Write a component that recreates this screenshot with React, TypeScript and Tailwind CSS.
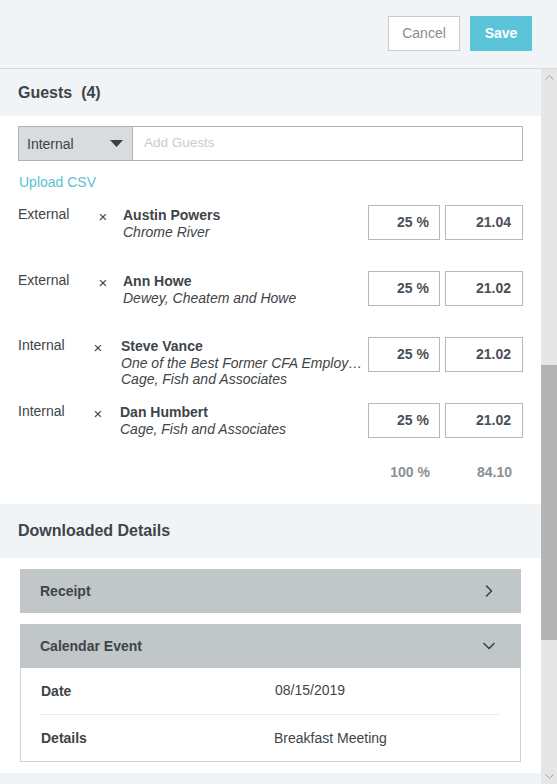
import React from "react";

const guests = [
  { type: "External", name: "Austin Powers", lines: ["Chrome River"], pct: "25 %", amt: "21.04", typeW: "w-[80px]", namePad: "pl-[15px]", pt: "pt-[1px]", subLead: "leading-[17px]" },
  { type: "External", name: "Ann Howe", lines: ["Dewey, Cheatem and Howe"], pct: "25 %", amt: "21.02", typeW: "w-[80px]", namePad: "pl-[15px]", pt: "pt-[1px]", subLead: "leading-[17px]" },
  { type: "Internal", name: "Steve Vance", lines: ["One of the Best Former CFA Employ…", "Cage, Fish and Associates"], pct: "25 %", amt: "21.02", typeW: "w-[75px]", namePad: "pl-[18px]", pt: "pt-0", subLead: "leading-[16px]" },
  { type: "Internal", name: "Dan Humbert", lines: ["Cage, Fish and Associates"], pct: "25 %", amt: "21.02", typeW: "w-[75px]", namePad: "pl-[17px]", pt: "pt-0", subLead: "leading-[16px]" },
];

function ChevronRight() {
  return (
    <svg width="12" height="14" viewBox="0 0 12 14" fill="none">
      <path d="M3.5 2 L8.5 7 L3.5 12" stroke="#3e4448" strokeWidth="1.6" strokeLinecap="round" strokeLinejoin="round" />
    </svg>
  );
}

function ChevronDown() {
  return (
    <svg width="14" height="10" viewBox="0 0 14 10" fill="none">
      <path d="M2 2.5 L7 7.5 L12 2.5" stroke="#3e4448" strokeWidth="1.6" strokeLinecap="round" strokeLinejoin="round" />
    </svg>
  );
}

export default function App() {
  return (
    <div
      className="w-[557px] h-[784px] overflow-hidden bg-[#f0f4f7] flex flex-col text-[14px] text-[#3e4448]"
      style={{ fontFamily: '"Liberation Sans", Arial, sans-serif' }}
    >
      {/* Header */}
      <div className="h-[69px] shrink-0 border-b border-[#d5dadd] bg-[#f0f4f7] flex items-start justify-end pt-[16px] pr-[25px] gap-[10px]">
        <button className="w-[72px] h-[35px] bg-white border border-[#c7c9cb] text-[#8a8d90] text-[14px]">Cancel</button>
        <button className="w-[62px] h-[35px] bg-[#5bc4d8] text-white font-bold text-[14px]">Save</button>
      </div>

      {/* Scroll region */}
      <div className="flex flex-1 min-h-0">
        <div className="flex-1 flex flex-col min-w-0">
          {/* Guests header */}
          <div className="h-[47px] shrink-0 bg-[#f0f4f7] flex items-center px-[18px]">
            <span className="font-bold text-[16px] text-[#3e4448] whitespace-pre">Guests  (4)</span>
          </div>

          {/* Guests body */}
          <div className="bg-white pt-[10px] pb-[23px] pr-[18px] pl-[18px]">
            <div className="flex h-[35px]">
              <div className="w-[115px] h-full bg-[#d8dcde] border border-[#aeb2b5] flex items-center justify-between pl-[8px] pr-[9px]">
                <span className="text-[#3e4448] pt-[1px]">Internal</span>
                <svg width="13" height="7" viewBox="0 0 13 7">
                  <path d="M0 0 L13 0 L6.5 7 Z" fill="#3a3f43" />
                </svg>
              </div>
              <div className="flex-1 h-full border border-l-0 border-[#aeb2b5] flex items-center pl-[11px] text-[#c9cccf] text-[13.5px]">
                Add Guests
              </div>
            </div>
            <div className="mt-[12px] leading-[18px] text-[#5bbfd4] text-[14px] ml-[1px]">Upload CSV</div>

            <div className="mt-[14px] flex flex-col gap-[31px]">
              {guests.map((g, i) => (
                <div key={i} className="flex items-start h-[35px]">
                  <div className={`flex-1 flex items-start min-w-0 ${g.pt}`}>
                    <div className={`${g.typeW} shrink-0 leading-[17px] text-[#3e4448]`}>{g.type}</div>
                    <div className="shrink-0 leading-[17px] pt-[2px] text-[#3e4448] text-[15px] w-[10px] flex justify-center">
                      ×
                    </div>
                    <div className={`${g.namePad} min-w-0 flex-1 pt-[1px]`}>
                      <div className="font-bold leading-[17px] text-[#3e4448]">{g.name}</div>
                      {g.lines.map((l, j) => (
                        <div key={j} className={`italic ${g.subLead} text-[#3e4448] whitespace-nowrap overflow-hidden`}>
                          {l}
                        </div>
                      ))}
                    </div>
                  </div>
                  <div className="w-[72px] h-[35px] border border-[#b5b8bb] flex items-center justify-end pr-[10px] font-bold text-[#4a5055]">
                    {g.pct}
                  </div>
                  <div className="ml-[5px] w-[78px] h-[35px] border border-[#b5b8bb] flex items-center justify-end pr-[11px] font-bold text-[#4a5055]">
                    {g.amt}
                  </div>
                </div>
              ))}
            </div>

            <div className="mt-[25px] flex justify-end leading-[18px] font-bold text-[#8a8f93]">
              <div className="w-[72px] text-right pr-[10px]">100 %</div>
              <div className="ml-[5px] w-[78px] text-right pr-[11px]">84.10</div>
            </div>
          </div>

          {/* Downloaded details header */}
          <div className="h-[54px] shrink-0 bg-[#f0f4f7] flex items-center px-[18px]">
            <span className="font-bold text-[16px] text-[#3e4448]">Downloaded Details</span>
          </div>

          <div className="bg-white px-[20px] pt-[11px] pb-[11px] flex flex-col gap-[11px]">
            <div className="h-[44px] bg-[#c1c6c8] flex items-center justify-between pl-[20px] pr-[26px]">
              <span className="font-bold text-[#3e4448]">Receipt</span>
              <ChevronRight />
            </div>
            <div>
              <div className="h-[44px] bg-[#c1c6c8] flex items-center justify-between pl-[20px] pr-[25px]">
                <span className="font-bold text-[#3e4448]">Calendar Event</span>
                <ChevronDown />
              </div>
              <div className="border border-t-0 border-[#cfd2d4] pl-[18px] pr-[21px]">
                <div className="h-[47px] flex items-center border-b border-[#ebeced] pl-[2px]">
                  <div className="w-[234px] font-bold text-[#3e4448] pt-[1px]">Date</div>
                  <div className="text-[#3e4448] -mt-[1px]">08/15/2019</div>
                </div>
                <div className="h-[46px] flex items-center pl-[2px]">
                  <div className="w-[234px] font-bold text-[#3e4448] pt-[1px]">Details</div>
                  <div className="text-[#3e4448] -ml-[1px]">Breakfast Meeting</div>
                </div>
              </div>
            </div>
          </div>

          <div className="flex-1 bg-[#f0f4f7]" />
        </div>

        {/* Scrollbar */}
        <div className="w-[16px] shrink-0 bg-[#e6e6e6] flex flex-col">
          <div className="h-[16px] flex items-center justify-center">
            <svg width="9" height="5" viewBox="0 0 9 5">
              <path d="M0.5 4.5 L4.5 0.8 L8.5 4.5" stroke="#a3a3a3" strokeWidth="1" fill="none" />
            </svg>
          </div>
          <div className="h-[280px]" />
          <div className="h-[275px] bg-[#b3b3b3]" />
          <div className="flex-1" />
          <div className="h-[16px] flex items-center justify-center">
            <svg width="9" height="5" viewBox="0 0 9 5">
              <path d="M0.5 0.5 L4.5 4.2 L8.5 0.5" stroke="#a3a3a3" strokeWidth="1" fill="none" />
            </svg>
          </div>
        </div>
      </div>
    </div>
  );
}
